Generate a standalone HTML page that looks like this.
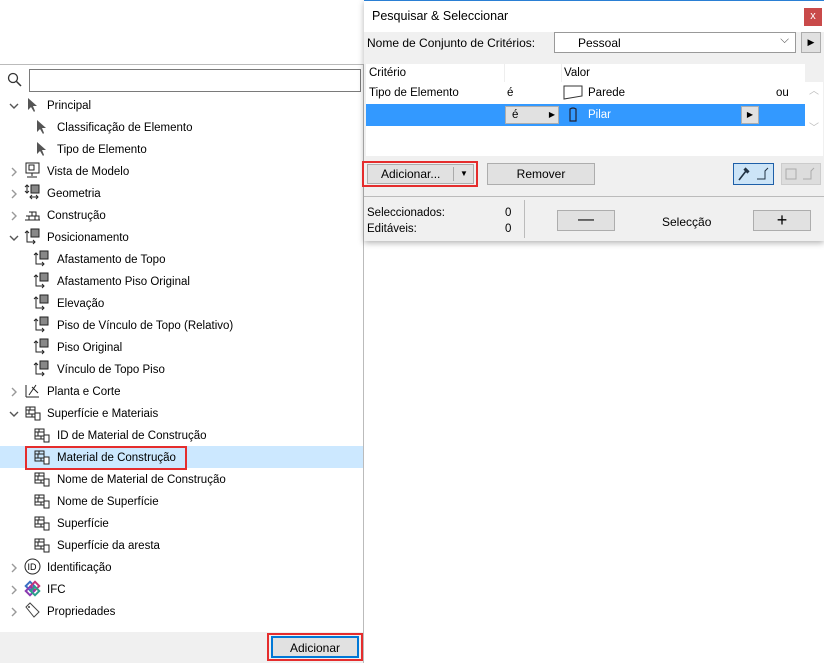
<!DOCTYPE html><html><head><style>
*{margin:0;padding:0;box-sizing:border-box}
body{width:824px;height:663px;background:#fff;font-family:"Liberation Sans",sans-serif;font-size:11.5px;color:#000;position:relative;overflow:hidden}
.a{position:absolute}
.row{position:absolute;left:0;height:22px;line-height:22px;white-space:nowrap}
.btn{position:absolute;background:#e1e1e1;border:1px solid #adadad;text-align:center}
</style></head><body>
<div class="a" style="left:0;top:64px;width:364px;height:599px;border:1px solid #bbb;border-left:none;background:#fff"></div>
<div class="a" style="left:0;top:632px;width:363px;height:31px;background:#f0f0f0"></div>
<svg class="a" style="left:7px;top:72px" width="16" height="16"><circle cx="6" cy="6" r="4.5" fill="none" stroke="#333" stroke-width="1.3"/><line x1="9.5" y1="9.5" x2="14" y2="14" stroke="#333" stroke-width="1.5"/></svg>
<div class="a" style="left:29px;top:69px;width:332px;height:23px;border:1px solid #7a7a7a;background:#fff"></div>
<div class="a" style="left:0;top:446px;width:363px;height:22px;background:#cce8ff"></div>
<div class="a" style="left:25px;top:446px;width:162px;height:24px;border:2px solid #e52d2d"></div>
<div id="tree"></div>
<div class="a" style="left:267px;top:633px;width:96px;height:28px;border:2px solid #e52d2d"></div>
<div class="btn" style="left:271px;top:636px;width:88px;height:22px;line-height:20px;border:2px solid #0078d7;font-size:12px">Adicionar</div>
<div class="a" style="left:364px;top:0;width:460px;height:241px;background:#f0f0f0;border-top:1px solid #2a7fd4;box-shadow:0 2px 6px rgba(0,0,0,.3)"></div>
<div class="a" style="left:364px;top:1px;width:460px;height:31px;background:#fff"></div>
<div class="a" style="left:372px;top:9px;font-size:12.5px">Pesquisar &amp; Seleccionar</div>
<div class="a" style="left:804px;top:8px;width:18px;height:18px;background:#c94a4a;color:#fff;text-align:center;line-height:16px;font-size:11px">x</div>
<div class="a" style="left:367px;top:36px;font-size:12px">Nome de Conjunto de Critérios:</div>
<div class="a" style="left:554px;top:32px;width:242px;height:21px;border:1px solid #999;background:#fff"><span class="a" style="left:23px;top:3px;font-size:12px">Pessoal</span><span class="a" style="right:6px;top:1px;color:#555">⌵</span></div>
<div class="btn" style="left:801px;top:32px;width:20px;height:21px;font-size:9px;line-height:19px">▶</div>
<div class="a" style="left:366px;top:64px;width:439px;height:92px;background:#fff"></div>
<div class="a" style="left:805px;top:82px;width:18px;height:74px;background:#fff;color:#bbb;font-size:10px;text-align:center">︿<br><br><br>﹀</div>
<div class="a" style="left:504px;top:64px;width:1px;height:18px;background:#eee"></div>
<div class="a" style="left:561px;top:64px;width:1px;height:18px;background:#eee"></div>
<div class="a" style="left:369px;top:67px">Critério</div>
<div class="a" style="left:564px;top:67px">Valor</div>
<div class="a" style="left:369px;top:87px">Tipo de Elemento</div>
<div class="a" style="left:507px;top:87px">é</div>
<svg class="a" style="left:563px;top:85px" width="20" height="15"><path d="M1 1H19V11L1 14Z" fill="none" stroke="#333"/></svg>
<div class="a" style="left:588px;top:87px">Parede</div>
<div class="a" style="left:776px;top:87px">ou</div>
<div class="a" style="left:366px;top:104px;width:439px;height:22px;background:#3399ff"></div>
<div class="btn" style="left:505px;top:106px;width:54px;height:18px;text-align:left;padding-left:6px;line-height:16px">é<span class="a" style="right:3px;font-size:8px">▶</span></div>
<svg class="a" style="left:568px;top:107px" width="10" height="16"><path d="M2 2Q5 0 8 2V14H2Z" fill="none" stroke="#223" stroke-width="1.2"/></svg>
<div class="a" style="left:588px;top:109px;color:#fff">Pilar</div>
<div class="btn" style="left:741px;top:106px;width:18px;height:18px;font-size:8px;line-height:16px">▶</div>
<div class="a" style="left:362px;top:161px;width:116px;height:26px;border:2px solid #e52d2d"></div>
<div class="btn" style="left:367px;top:164px;width:107px;height:20px;line-height:18px;text-align:left;padding-left:13px;font-size:12px">Adicionar...<span class="a" style="left:85px;top:2px;width:1px;height:14px;background:#aaa"></span><span class="a" style="left:92px;top:0;font-size:8px">▼</span></div>
<div class="btn" style="left:487px;top:163px;width:108px;height:22px;line-height:20px;font-size:12px">Remover</div>
<div class="a" style="left:733px;top:163px;width:41px;height:22px;border:1px solid #1e5fa8;background:#cce4f7"></div>
<svg class="a" style="left:735px;top:165px" width="38" height="18"><path d="M4 15L11 6M9 4L13 8M10 3L14 7" stroke="#234" stroke-width="1.6" fill="none"/><path d="M22 14H30V6L33 3" stroke="#234" fill="none"/></svg>
<div class="a" style="left:781px;top:163px;width:40px;height:22px;border:1px solid #ccc;background:#ddd"></div>
<svg class="a" style="left:783px;top:165px" width="36" height="18"><rect x="3" y="4" width="10" height="10" fill="none" stroke="#aaa"/><path d="M20 14H28V6L31 3" stroke="#aaa" fill="none"/></svg>
<div class="a" style="left:364px;top:196px;width:460px;height:1px;background:#bbb"></div>
<div class="a" style="left:524px;top:200px;width:1px;height:38px;background:#bbb"></div>
<div class="a" style="left:367px;top:207px">Seleccionados:</div>
<div class="a" style="left:505px;top:207px">0</div>
<div class="a" style="left:367px;top:223px">Editáveis:</div>
<div class="a" style="left:505px;top:223px">0</div>
<div class="btn" style="left:557px;top:210px;width:58px;height:21px;line-height:17px;font-size:16px">—</div>
<div class="a" style="left:662px;top:215px;font-size:12px">Selecção</div>
<div class="btn" style="left:753px;top:210px;width:58px;height:21px;line-height:18px;font-size:18px">+</div>
<script>
var items=[[0,1,'v','Principal','cur'],[1,0,'','Classificação de Elemento','cur'],[1,0,'','Tipo de Elemento','cur'],[0,1,'>','Vista de Modelo','mon'],[0,1,'>','Geometria','geo'],[0,1,'>','Construção','bri'],[0,1,'v','Posicionamento','pos'],[1,0,'','Afastamento de Topo','pos'],[1,0,'','Afastamento Piso Original','pos'],[1,0,'','Elevação','pos'],[1,0,'','Piso de Vínculo de Topo (Relativo)','pos'],[1,0,'','Piso Original','pos'],[1,0,'','Vínculo de Topo Piso','pos'],[0,1,'>','Planta e Corte','pc'],[0,1,'v','Superfície e Materiais','mat'],[1,0,'','ID de Material de Construção','mat'],[1,0,'','Material de Construção','mat'],[1,0,'','Nome de Material de Construção','mat'],[1,0,'','Nome de Superfície','mat'],[1,0,'','Superfície','mat'],[1,0,'','Superfície da aresta','mat'],[0,1,'>','Identificação','id'],[0,1,'>','IFC','ifc'],[0,1,'>','Propriedades','tag']];
var ic={cur:'<path d="M4 2L4 14L7 11L10 16L11 15L9 10L13 10Z" fill="#555"/>',
mon:'<rect x="2" y="1" width="13" height="10" fill="none" stroke="#222"/><rect x="5" y="3" width="5" height="5" fill="none" stroke="#222"/><path d="M8 11V14M3 15H13" stroke="#222"/>',
geo:'<rect x="7" y="1" width="8" height="8" fill="#888" stroke="#222"/><path d="M3 1V9M1 3L3 1L5 3M1 7L3 9L5 7M6 13H14M8 11L6 13L8 15M12 11L14 13L12 15" stroke="#222" fill="none"/>',
bri:'<path d="M1 14H16M2 10H15V14M5 6H12V10M8 6V10M5 10V14M11 10V14" stroke="#222" fill="none"/>',
pos:'<rect x="7" y="1" width="8" height="8" fill="#888" stroke="#222"/><path d="M3 3V14H11M1 5L3 3L5 5M9 12L11 14L9 16" stroke="#222" fill="none"/>',
pc:'<path d="M2 15L2 3M2 15H15M5 13L12 3M8 5L14 11" stroke="#222" fill="none"/>',
mat:'<path d="M2 3H11V13H2ZM2 6H11M2 10H11M6 3V6M5 6V10M8 10V13" stroke="#222" fill="none"/><rect x="11" y="9" width="5" height="7" fill="#fff" stroke="#222"/>',
id:'<circle cx="8.5" cy="8.5" r="7.5" fill="none" stroke="#222"/><text x="3.5" y="12" font-size="9" font-family="Liberation Sans">ID</text>',
ifc:'<rect x="3" y="3" width="6" height="6" transform="rotate(45 6 6)" fill="none" stroke="#3a6fc2" stroke-width="2"/><rect x="8" y="3" width="6" height="6" transform="rotate(45 11 6)" fill="none" stroke="#c2357a" stroke-width="2"/><rect x="3" y="8" width="6" height="6" transform="rotate(45 6 11)" fill="none" stroke="#8a3ab0" stroke-width="2"/><rect x="8" y="8" width="6" height="6" transform="rotate(45 11 11)" fill="none" stroke="#2aa08a" stroke-width="2"/>',
tag:'<path d="M2 5L6 1L15 10L10 15Z" fill="none" stroke="#444"/><circle cx="5" cy="5" r="1" fill="#444"/>'};
var h='';items.forEach(function(it,i){var y=95+22*i;
if(it[2]=='v')h+='<svg class="a" style="left:9px;top:'+(y+8)+'px" width="10" height="7"><path d="M1 1L5 5L9 1" stroke="#555" stroke-width="1.4" fill="none"/></svg>';
if(it[2]=='>')h+='<svg class="a" style="left:11px;top:'+(y+6)+'px" width="7" height="10"><path d="M1 1L5 5L1 9" stroke="#999" stroke-width="1.4" fill="none"/></svg>';
h+='<svg class="a" style="left:'+(24+(it[0]?9:0))+'px;top:'+(y+1)+'px" width="18" height="18">'+ic[it[4]]+'</svg>';
h+='<div class="row" style="top:'+y+'px;left:'+(47+(it[0]?10:0))+'px">'+it[3]+'</div>';});
document.getElementById('tree').innerHTML=h;
</script>
</body></html>
